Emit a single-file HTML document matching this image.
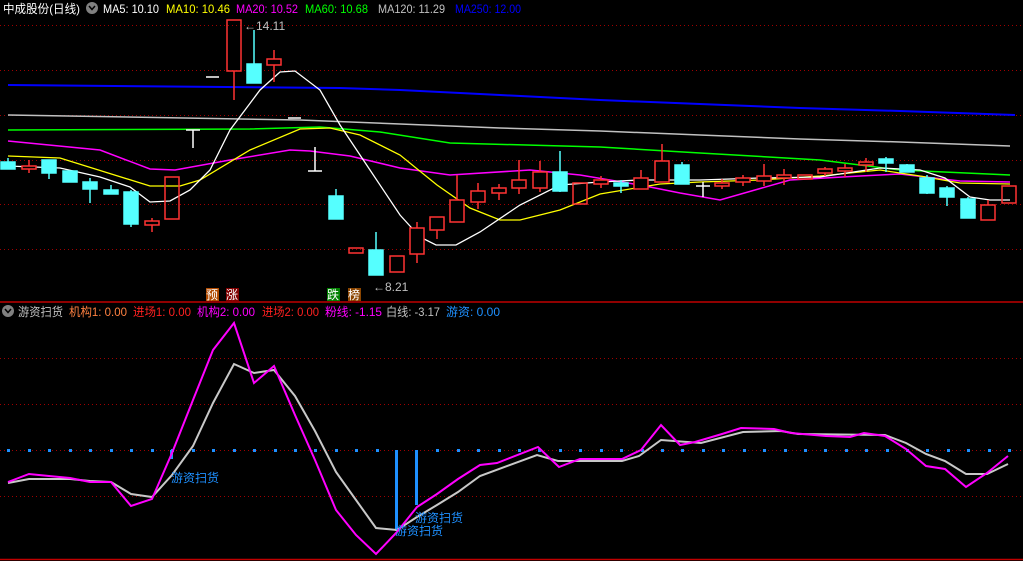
<!DOCTYPE html>
<html><head><meta charset="utf-8"><style>
html,body{margin:0;padding:0;background:#000;width:1023px;height:561px;overflow:hidden}
svg{display:block}
text{font-family:"Liberation Sans","Noto Sans CJK SC",sans-serif;font-size:12px}
</style></head><body>
<svg width="1023" height="561" viewBox="0 0 1023 561" xmlns="http://www.w3.org/2000/svg">
<rect width="1023" height="561" fill="#000"/>
<g stroke="#a00000" stroke-width="1" stroke-dasharray="1 3">
<line x1="0" y1="25.5" x2="1023" y2="25.5"/><line x1="0" y1="70.5" x2="1023" y2="70.5"/>
<line x1="0" y1="115.5" x2="1023" y2="115.5"/><line x1="0" y1="160.5" x2="1023" y2="160.5"/>
<line x1="0" y1="204.5" x2="1023" y2="204.5"/><line x1="0" y1="249.5" x2="1023" y2="249.5"/>
<line x1="0" y1="358.5" x2="1023" y2="358.5"/><line x1="0" y1="404.5" x2="1023" y2="404.5"/>
<line x1="0" y1="450.5" x2="1023" y2="450.5"/><line x1="0" y1="496.5" x2="1023" y2="496.5"/>
</g>
<line x1="0" y1="302" x2="1023" y2="302" stroke="#c00000" stroke-width="1.5"/>
<line x1="0" y1="559.5" x2="1023" y2="559.5" stroke="#c00000" stroke-width="1.5"/>
<g fill="none" stroke-width="1.3">
<polyline stroke="#0000ff" stroke-width="2" points="8,85 340,88 400,90 500,95 600,100 700,104 800,108 900,111 1015,115"/>
<polyline stroke="#c0c0c0" stroke-width="1.5" points="8,115 300,120 400,124 500,128 600,131 700,135 800,139 900,142 1010,146"/>
<polyline stroke="#00ff00" stroke-width="1.5" points="8,130 250,129 320,127 380,132 450,143 600,147 700,153 820,160 900,170 1010,175"/>
<polyline stroke="#ff00ff" stroke-width="1.5" points="8,141 100,150 150,169 175,170 230,160 290,150 310,151 350,156 400,168 450,175 530,170 580,175 640,185 680,193 720,200 790,180 860,176 900,174 960,181 1010,182"/>
<polyline stroke="#ffff00" points="8,156 60,158 150,186 180,186 200,180 250,150 300,129 330,128 360,135 400,155 437,185 470,208 500,220 520,220 560,210 600,194 660,184 700,182 760,180 820,176 880,170 920,176 960,183 1010,184"/>
<polyline stroke="#ffffff" points="8,166 60,168 100,177 130,187 150,202 170,201 190,190 210,170 230,130 260,90 280,72 295,71 320,90 340,125 370,170 400,215 420,237 436,245 456,245 480,232 520,205 560,185 600,182 640,180 700,180 760,178 820,177 880,168 920,170 945,178 970,197 990,200 1010,200"/>
</g>
<g stroke-width="1.5">
<g stroke="#55ffff" fill="#55ffff">
<line x1="8" y1="158" x2="8" y2="169"/><rect x="1" y="162" width="14" height="7"/>
<line x1="49" y1="160" x2="49" y2="179"/><rect x="42" y="160" width="14" height="13"/>
<line x1="70" y1="171" x2="70" y2="182"/><rect x="63" y="171" width="14" height="11"/>
<line x1="90" y1="178" x2="90" y2="203"/><rect x="83" y="182" width="14" height="7"/>
<line x1="111" y1="185" x2="111" y2="194"/><rect x="104" y="190" width="14" height="4"/>
<line x1="131" y1="190" x2="131" y2="227"/><rect x="124" y="192" width="14" height="32"/>
<line x1="254" y1="30" x2="254" y2="83"/><rect x="247" y="64" width="14" height="19"/>
<line x1="336" y1="189" x2="336" y2="219"/><rect x="329" y="196" width="14" height="23"/>
<line x1="376" y1="232" x2="376" y2="275"/><rect x="369" y="250" width="14" height="25"/>
<line x1="560" y1="151" x2="560" y2="192"/><rect x="553" y="172" width="14" height="19"/>
<line x1="621" y1="180" x2="621" y2="193"/><rect x="614" y="183" width="14" height="3"/>
<line x1="682" y1="162" x2="682" y2="184"/><rect x="675" y="165" width="14" height="19"/>
<line x1="886" y1="157" x2="886" y2="172"/><rect x="879" y="159" width="14" height="4"/>
<line x1="907" y1="164" x2="907" y2="172"/><rect x="900" y="165" width="14" height="7"/>
<line x1="927" y1="175" x2="927" y2="194"/><rect x="920" y="178" width="14" height="15"/>
<line x1="947" y1="186" x2="947" y2="206"/><rect x="940" y="188" width="14" height="9"/>
<line x1="968" y1="197" x2="968" y2="218"/><rect x="961" y="199" width="14" height="19"/>
</g>
<g stroke="#ff3333" fill="none">
<line x1="29" y1="160" x2="29" y2="173"/><rect x="22" y="166" width="14" height="3" fill="#000"/>
<line x1="152" y1="218" x2="152" y2="232"/><rect x="145" y="221" width="14" height="4" fill="#000"/>
<rect x="165" y="177" width="14" height="42"/>
<line x1="234" y1="71" x2="234" y2="100"/><rect x="227" y="20" width="14" height="51"/>
<line x1="274" y1="50" x2="274" y2="82"/><rect x="267" y="59" width="14" height="6" fill="#000"/>
<rect x="349" y="248" width="14" height="5"/>
<rect x="390" y="256" width="14" height="16"/>
<line x1="417" y1="222" x2="417" y2="263"/><rect x="410" y="228" width="14" height="26" fill="#000"/>
<line x1="437" y1="217" x2="437" y2="239"/><rect x="430" y="217" width="14" height="13" fill="#000"/>
<line x1="457" y1="175" x2="457" y2="222"/><rect x="450" y="200" width="14" height="22" fill="#000"/>
<line x1="478" y1="183" x2="478" y2="209"/><rect x="471" y="191" width="14" height="11" fill="#000"/>
<line x1="499" y1="184" x2="499" y2="200"/><rect x="492" y="188" width="14" height="5" fill="#000"/>
<line x1="519" y1="160" x2="519" y2="194"/><rect x="512" y="180" width="14" height="8" fill="#000"/>
<line x1="540" y1="161" x2="540" y2="192"/><rect x="533" y="172" width="14" height="16" fill="#000"/>
<rect x="573" y="183" width="14" height="21"/>
<line x1="601" y1="176" x2="601" y2="188"/><rect x="594" y="180" width="14" height="4" fill="#000"/>
<line x1="641" y1="170" x2="641" y2="189"/><rect x="634" y="178" width="14" height="11" fill="#000"/>
<line x1="662" y1="144" x2="662" y2="182"/><rect x="655" y="161" width="14" height="21" fill="#000"/>
<line x1="722" y1="179" x2="722" y2="189"/><rect x="715" y="183" width="14" height="3" fill="#000"/>
<line x1="743" y1="175" x2="743" y2="186"/><rect x="736" y="178" width="14" height="4" fill="#000"/>
<line x1="764" y1="164" x2="764" y2="186"/><rect x="757" y="176" width="14" height="5" fill="#000"/>
<line x1="784" y1="169" x2="784" y2="185"/><rect x="777" y="175" width="14" height="3" fill="#000"/>
<rect x="798" y="175" width="14" height="4"/>
<line x1="825" y1="167" x2="825" y2="176"/><rect x="818" y="169" width="14" height="4" fill="#000"/>
<line x1="845" y1="164" x2="845" y2="177"/><rect x="838" y="168" width="14" height="3" fill="#000"/>
<line x1="866" y1="158" x2="866" y2="172"/><rect x="859" y="162" width="14" height="3" fill="#000"/>
<line x1="988" y1="200" x2="988" y2="205"/><rect x="981" y="205" width="14" height="15"/>
<rect x="1002" y="186" width="14" height="17"/>
</g>
<g stroke="#ffffff">
<line x1="186" y1="130" x2="200" y2="130"/><line x1="193" y1="130" x2="193" y2="148"/>
<line x1="206" y1="77" x2="219" y2="77"/>
<line x1="288" y1="118" x2="301" y2="118"/>
<line x1="308" y1="171" x2="322" y2="171"/><line x1="315" y1="147" x2="315" y2="171"/>
<line x1="696" y1="186" x2="710" y2="186"/><line x1="703" y1="182" x2="703" y2="197"/>
</g>
</g>
<text x="244" y="30" fill="#c0c0c0">←14.11</text>
<text x="373" y="291" fill="#c0c0c0">←8.21</text>
<g font-size="12">
<rect x="206" y="288" width="13" height="13" fill="#b04a00"/><text x="206" y="299" fill="#fff">预</text>
<rect x="226" y="288" width="13" height="13" fill="#800000"/><text x="226" y="299" fill="#fff">涨</text>
<rect x="327" y="288" width="13" height="13" fill="#008000"/><text x="327" y="299" fill="#fff">跌</text>
<rect x="348" y="288" width="13" height="13" fill="#8b4500"/><text x="348" y="299" fill="#fff">榜</text>
</g>
<text x="3" y="13" fill="#ffffff" textLength="77" lengthAdjust="spacingAndGlyphs">中成股份(日线)</text>
<circle cx="92" cy="8" r="6" fill="#808080"/><path d="M89,6 L92,9.5 L95,6" stroke="#000" stroke-width="1.5" fill="none"/>
<text x="103" y="13" fill="#ffffff" textLength="56" lengthAdjust="spacingAndGlyphs">MA5: 10.10</text>
<text x="166" y="13" fill="#ffff00" textLength="64" lengthAdjust="spacingAndGlyphs">MA10: 10.46</text>
<text x="236" y="13" fill="#ff00ff" textLength="62" lengthAdjust="spacingAndGlyphs">MA20: 10.52</text>
<text x="305" y="13" fill="#00ff00" textLength="63" lengthAdjust="spacingAndGlyphs">MA60: 10.68</text>
<text x="378" y="13" fill="#c0c0c0" textLength="67" lengthAdjust="spacingAndGlyphs">MA120: 11.29</text>
<text x="455" y="13" fill="#0000ff" textLength="66" lengthAdjust="spacingAndGlyphs">MA250: 12.00</text>
<circle cx="8" cy="311" r="6" fill="#808080"/><path d="M5,309 L8,312.5 L11,309" stroke="#000" stroke-width="1.5" fill="none"/>
<text x="18" y="316" fill="#c0c0c0" textLength="45" lengthAdjust="spacingAndGlyphs">游资扫货</text>
<text x="69" y="316" fill="#ff8040" textLength="58" lengthAdjust="spacingAndGlyphs">机构1: 0.00</text>
<text x="133" y="316" fill="#ff2020" textLength="58" lengthAdjust="spacingAndGlyphs">进场1: 0.00</text>
<text x="197" y="316" fill="#ff00ff" textLength="58" lengthAdjust="spacingAndGlyphs">机构2: 0.00</text>
<text x="262" y="316" fill="#ff2020" textLength="57" lengthAdjust="spacingAndGlyphs">进场2: 0.00</text>
<text x="325" y="316" fill="#ff00ff" textLength="57" lengthAdjust="spacingAndGlyphs">粉线: -1.15</text>
<text x="386" y="316" fill="#c0c0c0" textLength="54" lengthAdjust="spacingAndGlyphs">白线: -3.17</text>
<text x="446" y="316" fill="#1e90ff" textLength="54" lengthAdjust="spacingAndGlyphs">游资: 0.00</text>
<g fill="#1e90ff">
<rect x="7" y="449" width="3" height="3"/><rect x="28" y="449" width="3" height="3"/><rect x="48" y="449" width="3" height="3"/><rect x="69" y="449" width="3" height="3"/><rect x="89" y="449" width="3" height="3"/><rect x="110" y="449" width="3" height="3"/><rect x="130" y="449" width="3" height="3"/><rect x="151" y="449" width="3" height="3"/><rect x="171" y="449" width="3" height="3"/><rect x="192" y="449" width="3" height="3"/><rect x="212" y="449" width="3" height="3"/><rect x="233" y="449" width="3" height="3"/><rect x="253" y="449" width="3" height="3"/><rect x="274" y="449" width="3" height="3"/><rect x="294" y="449" width="3" height="3"/><rect x="314" y="449" width="3" height="3"/><rect x="335" y="449" width="3" height="3"/><rect x="355" y="449" width="3" height="3"/><rect x="376" y="449" width="3" height="3"/><rect x="436" y="449" width="3" height="3"/><rect x="457" y="449" width="3" height="3"/><rect x="477" y="449" width="3" height="3"/><rect x="498" y="449" width="3" height="3"/><rect x="518" y="449" width="3" height="3"/><rect x="538" y="449" width="3" height="3"/><rect x="559" y="449" width="3" height="3"/><rect x="579" y="449" width="3" height="3"/><rect x="600" y="449" width="3" height="3"/><rect x="620" y="449" width="3" height="3"/><rect x="641" y="449" width="3" height="3"/><rect x="661" y="449" width="3" height="3"/><rect x="681" y="449" width="3" height="3"/><rect x="702" y="449" width="3" height="3"/><rect x="722" y="449" width="3" height="3"/><rect x="743" y="449" width="3" height="3"/><rect x="763" y="449" width="3" height="3"/><rect x="784" y="449" width="3" height="3"/><rect x="804" y="449" width="3" height="3"/><rect x="824" y="449" width="3" height="3"/><rect x="845" y="449" width="3" height="3"/><rect x="865" y="449" width="3" height="3"/><rect x="886" y="449" width="3" height="3"/><rect x="906" y="449" width="3" height="3"/><rect x="926" y="449" width="3" height="3"/><rect x="947" y="449" width="3" height="3"/><rect x="967" y="449" width="3" height="3"/><rect x="988" y="449" width="3" height="3"/><rect x="1008" y="449" width="3" height="3"/>
<rect x="170" y="450" width="3" height="9"/>
<rect x="395" y="450" width="3" height="81"/>
<rect x="415" y="450" width="3" height="55"/>
</g>
<g fill="none" stroke-width="2">
<polyline stroke="#c8c8c8" points="8,483 29,479 49,479 70,479 90,481 111,482 131,494 152,497 172,475 193,446 213,403 234,364 254,373 274,370 295,396 315,431 336,472 356,500 376,528 397,530 417,517 437,505 458,492 480,476 537,455 558,461 622,461 639,456 661,440 701,443 743,432 781,431 798,434 885,435 906,443 926,454 945,461 966,474 987,474 1008,464"/>
<polyline stroke="#ff00ff" points="8,482 29,474 49,476 70,478 90,482 111,482 131,506 152,499 172,453 193,400 213,350 234,323 254,383 274,366 295,415 315,460 336,510 356,535 376,554 397,532 417,507 437,494 458,479 480,465 497,463 538,447 559,467 580,459 622,459 641,450 661,425 680,445 695,442 722,434 741,428 774,429 791,433 826,436 850,437 864,433 885,436 906,449 926,466 945,469 966,487 987,473 1008,456"/>
</g>
<g fill="#1e90ff" font-size="12">
<text x="171" y="482">游资扫货</text>
<text x="415" y="522">游资扫货</text>
<text x="395" y="535">游资扫货</text>
</g>
</svg>
</body></html>
